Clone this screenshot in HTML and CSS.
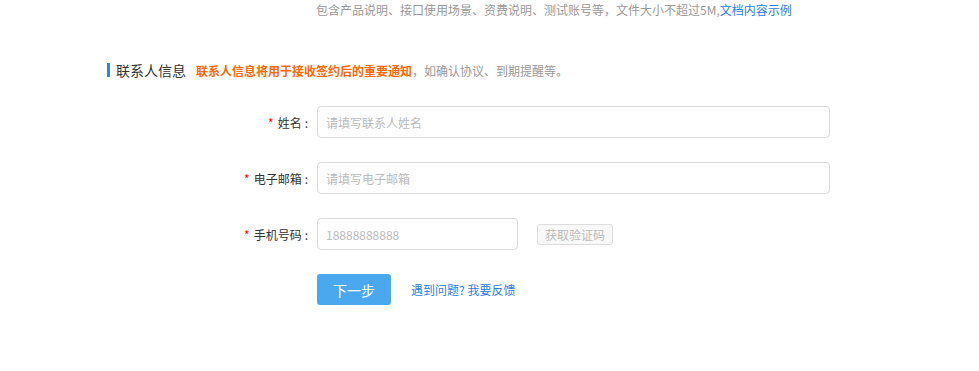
FILE: index.html
```html
<!DOCTYPE html>
<html lang="zh-CN">
<head>
    <meta charset="UTF-8">
    <meta name="viewport" content="width=device-width, initial-scale=1.0">
    <title>联系人信息</title>
    <link rel="stylesheet" href="styles.css">
</head>
<body>
    <div class="page">
        <p class="tip">包含产品说明、接口使用场景、资费说明、测试账号等，文件大小不超过5M,<a href="#" class="link">文档内容示例</a></p>

        <div class="section-title">
            <h2>联系人信息</h2>
            <p class="notice"><strong>联系人信息将用于接收签约后的重要通知</strong>，如确认协议、到期提醒等。</p>
        </div>

        <form class="form">
            <div class="row">
                <label class="label"><span class="req">*</span>姓名<span class="colon">:</span></label>
                <input class="input" type="text" placeholder="请填写联系人姓名">
            </div>
            <div class="row">
                <label class="label"><span class="req">*</span>电子邮箱<span class="colon">:</span></label>
                <input class="input" type="text" placeholder="请填写电子邮箱">
            </div>
            <div class="row">
                <label class="label"><span class="req">*</span>手机号码<span class="colon">:</span></label>
                <input class="input short" type="text" placeholder="18888888888">
                <button class="code-btn" type="button" disabled>获取验证码</button>
            </div>
            <div class="row actions">
                <span class="label"></span>
                <button class="next-btn" type="button">下一步</button>
                <a href="#" class="feedback">遇到问题? 我要反馈</a>
            </div>
        </form>
    </div>
</body>
</html>
```

FILE: styles.css
```css
* {
    margin: 0;
    padding: 0;
    box-sizing: border-box;
}

body {
    font-family: "Microsoft YaHei", "Noto Sans CJK SC", "Liberation Sans", sans-serif;
    font-size: 12px;
    color: #333;
    background: #fff;
}

a {
    text-decoration: none;
}

.page {
    width: 830px;
    padding-left: 107px;
}

.tip {
    margin-left: 209px;
    line-height: 20px;
    color: #999;
}

.tip .link {
    color: #2b7de9;
}

.section-title {
    display: flex;
    align-items: center;
    margin-top: 40px;
    height: 20px;
}

.section-title h2 {
    font-size: 14px;
    font-weight: normal;
    line-height: 14px;
    border-left: 3px solid #1f8cec;
    padding-left: 6px;
    color: #333;
}

.notice {
    margin-left: 10px;
    color: #999;
}

.notice strong {
    color: #ff6600;
}

.form {
    margin-top: 26px;
}

.row {
    display: flex;
    align-items: center;
    margin-bottom: 24px;
}

.label {
    width: 210px;
    padding-right: 9px;
    text-align: right;
    color: #333;
}

.req {
    color: #f00;
    margin-right: 4px;
}

.colon {
    margin-left: 3px;
}

.input {
    width: 513px;
    height: 32px;
    border: 1px solid #d9d9d9;
    border-radius: 4px;
    padding: 0 8px;
    font: inherit;
    color: #333;
    outline: none;
}

.input::placeholder {
    color: #bbb;
}

.input.short {
    width: 201px;
}

.code-btn {
    margin-left: 19px;
    width: 76px;
    height: 21px;
    border: 1px solid #ddd;
    border-radius: 3px;
    background: #f8f8f8;
    color: #bbb;
    font: inherit;
}

.next-btn {
    width: 74px;
    height: 31px;
    border: none;
    border-radius: 3px;
    background: #4aa8ee;
    color: #fff;
    font-family: inherit;
    font-size: 14px;
    cursor: pointer;
}

.feedback {
    margin-left: 20px;
    color: #2b7de9;
}
```
